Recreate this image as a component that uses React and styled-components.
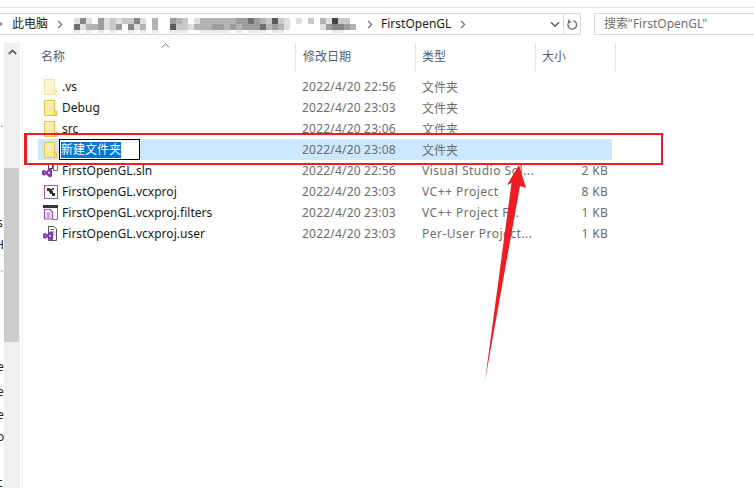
import React from "react";
import styled, { createGlobalStyle } from "styled-components";

const Global = createGlobalStyle`
  html, body { margin: 0; padding: 0; background: #fff; }
  * { box-sizing: border-box; }
`;

const Page = styled.div`
  position: relative;
  width: 754px;
  height: 488px;
  overflow: hidden;
  background: #fff;
  font-family: "Noto Sans", "Noto Sans CJK SC", "Liberation Sans", sans-serif;
  font-size: 12px;
  color: #1a1a1a;
`;

const TopBand = styled.div`
  height: 8px;
  border-bottom: 1px solid #e3e3e3;
`;

const Toolbar = styled.div`
  display: flex;
  align-items: stretch;
  height: 22px;
  margin-top: 5px;
  margin-left: -1px;
`;

const AddressBar = styled.div`
  display: flex;
  align-items: center;
  flex: none;
  width: 582px;
  border: 1px solid #d9d9d9;
`;

const Crumb = styled.span`
  line-height: 20px;
  white-space: nowrap;
  color: #1a1a1a;
  font-size: 12px;
`;

const ChevronSlot = styled.span`
  display: flex;
  align-items: center;
  justify-content: center;
  width: ${(p) => p.$w}px;
  flex: none;
`;

const Spacer = styled.div`
  flex: 1;
`;

const LeadGap = styled.span`
  width: 8px;
  flex: none;
`;

const RefreshCell = styled.div`
  display: flex;
  align-items: center;
  justify-content: center;
  flex: none;
  width: 17px;
  height: 100%;
  border-left: 1px solid #d9d9d9;
`;

const SearchBox = styled.div`
  flex: none;
  width: 170px;
  margin-left: 13px;
  padding-left: 9px;
  border: 1px solid #d9d9d9;
  color: #6f6f6f;
  line-height: 20px;
  white-space: nowrap;
`;

const Main = styled.div`
  display: flex;
  margin-top: 8px;
  height: 445px;
`;

const Fragments = styled.div`
  width: 4px;
  flex: none;
  overflow: hidden;
  display: flex;
  flex-direction: column;
`;

const Fragment = styled.span`
  display: block;
  height: 12px;
  line-height: 12px;
  margin-top: ${(p) => p.$top}px;
  margin-left: ${(p) => p.$left || 0}px;
  font-size: 12px;
  color: ${(p) => p.$color || "#222"};
`;

const ScrollTrack = styled.div`
  width: 16px;
  flex: none;
  display: flex;
  flex-direction: column;
  background: #f0f0f0;
`;

const ScrollButton = styled.div`
  height: 18px;
  display: flex;
  align-items: center;
  justify-content: center;
`;

const ScrollThumb = styled.div`
  width: 15px;
  height: 174px;
  margin-top: 107px;
  background: #cdcdcd;
`;

const Pane = styled.div`
  flex: 1;
  margin-left: 2px;
  border-left: 1px solid #f1f1f1;
  padding-left: 15px;
`;

const Header = styled.div`
  position: relative;
  display: grid;
  grid-template-columns: 258px 120px 120px 80px;
  height: 27px;
`;

const HeaderCell = styled.div`
  padding-left: ${(p) => p.$pad}px;
  border-right: 1px solid #e5e5e5;
  line-height: 28px;
  color: #4c607a;
  font-size: 12px;
`;

const SortCaret = styled.svg`
  position: absolute;
  left: 123px;
  top: 0;
`;

const List = styled.div`
  display: flex;
  flex-direction: column;
  margin-top: 6px;
  width: 574px;
`;

const Row = styled.div`
  display: grid;
  grid-template-columns: 258px 120px 120px 1fr;
  align-items: center;
  height: 21px;
  padding: 0 4px 0 6px;
  background: ${(p) => (p.$selected ? "#cce8ff" : "transparent")};
`;

const NameCell = styled.div`
  display: flex;
  align-items: center;
  gap: 5px;
  min-width: 0;
`;

const IconSlot = styled.span`
  display: flex;
  width: 13px;
  flex: none;
  justify-content: center;
  opacity: ${(p) => (p.$hidden ? 0.5 : 1)};
`;

const FileName = styled.span`
  white-space: nowrap;
  color: #1a1a1a;
  letter-spacing: 0.03px;
`;

const Meta = styled.span`
  color: #6d6d6d;
  white-space: nowrap;
  letter-spacing: ${(p) => p.$spacing || 0}px;
`;

const SizeCell = styled(Meta)`
  text-align: right;
`;

const RenameBox = styled.div`
  display: flex;
  align-items: center;
  width: 81px;
  height: 21px;
  margin-left: -3px;
  padding-left: 1px;
  border: 1px solid #000;
  background: #fff;
`;

const SelectedText = styled.span`
  background: #0078d7;
  color: #fff;
  line-height: 16px;
  white-space: nowrap;
`;

const RedFrame = styled.div`
  position: absolute;
  left: 24px;
  top: 133px;
  width: 639px;
  height: 32px;
  border: 2px solid #ee1c25;
  border-left-width: 3px;
`;

const ArrowMark = styled.svg`
  position: absolute;
  left: 480px;
  top: 160px;
`;

const MosaicArt = styled.svg`
  flex: none;
`;

const Chevron = ({ c = "#777" }) => (
  <svg width="6" height="9" viewBox="0 0 6 9">
    <path d="M1.2 1 L4.6 4.5 L1.2 8" fill="none" stroke={c} strokeWidth="1.3" />
  </svg>
);

const mosaicRows = [
  [1,5,1,0,4,1,2,1,2,2,5,1,0,3,0,0,4,3,2,0,1,3,3,3,3,3,3,4,4,6,4,3,2,7,2,1,0,1,0,2,0,3,1,8,2,2,0],
  [6,1,3,3,4,1,2,4,0,5,1,3,0,3,0,0,7,2,2,1,3,3,3,4,4,3,4,3,4,4,4,6,3,4,3,1,0,0,0,0,0,1,4,5,5,4,3],
  [1,0,1,0,1,0,1,0,0,1,0,1,0,1,0,0,1,1,1,0,0,1,1,1,1,1,0,1,0,1,1,1,0,1,1,0,0,0,0,0,0,0,0,1,1,0,0],
];

const Mosaic = () => (
  <MosaicArt width="286" height="18" viewBox="0 0 286 18">
    {mosaicRows.map((line, r) =>
      line.map((d, c) => {
        if (d === 0) return null;
        const v = 245 - d * 22 + (r === 2 ? 12 : 0);
        return (
          <rect key={`${r}-${c}`} x={c * 6 + 2} y={r * 6 + 3} width="6" height="6" fill={`rgb(${v},${v},${v})`} />
        );
      })
    )}
  </MosaicArt>
);

const FolderIcon = () => (
  <svg width="13" height="16" viewBox="0 0 13 16">
    <defs>
      <linearGradient id="fold" x1="0" y1="0" x2="1" y2="1">
        <stop offset="0" stopColor="#fff2c2" />
        <stop offset="1" stopColor="#fde38c" />
      </linearGradient>
    </defs>
    <path d="M0.5 0.5 H10.5 V11 H12.5 V15.5 H0.5 Z" fill="url(#fold)" stroke="#ecc24f" />
    <path d="M10.5 11 V15.5" stroke="#ecc24f" />
  </svg>
);

const VsMark = () => (
  <path
    d="M0 8 L2.2 6.8 L4 8.4 L7.6 5 L10 6.2 V13.4 L7.6 14.6 L4 11.2 L2.2 12.8 L0 11.6 Z M2 9 V10.6 L2.9 9.8 Z M5.6 9.8 L7.6 11.3 V8.3 Z"
    fill="#8236b4"
    fillRule="evenodd"
  />
);

const SlnIcon = () => (
  <svg width="16" height="15" viewBox="0 0 16 15" style={{ marginLeft: -2, flex: "none" }}>
    <rect x="6.5" y="0.5" width="4" height="5" fill="#fff" stroke="#444" />
    <rect x="11.5" y="0.5" width="4" height="7" fill="#fff" stroke="#777" />
    <VsMark />
  </svg>
);

const ProjIcon = () => (
  <svg width="14" height="14" viewBox="0 0 14 14" style={{ flex: "none" }}>
    <rect x="0.5" y="0.5" width="13" height="13" fill="#fff" stroke="#9b59b0" />
    <path d="M3 3 H6 V4 H8 V6 H9 V8 H11 V11 H8 V9 H6 V7.5 H5 V6 H3 Z" fill="#2e2e2e" />
    <rect x="8" y="3" width="2" height="2" fill="#555" />
  </svg>
);

const FiltersIcon = () => (
  <svg width="15" height="15" viewBox="0 0 15 15" style={{ flex: "none" }}>
    <rect x="0" y="0" width="15" height="3" fill="#333" />
    <path d="M14.5 3 V14.5 H10" fill="none" stroke="#777" />
    <path d="M1.5 4.5 H7 L9.5 7 V14 H1.5 Z" fill="#fff" stroke="#9b4fb0" strokeWidth="1.2" />
    <path d="M3.5 8 H7.5 M3.5 10 H7.5 M3.5 12 H7.5" stroke="#9b4fb0" />
  </svg>
);

const UserIcon = () => (
  <svg width="15" height="15" viewBox="0 0 15 15" style={{ marginLeft: -1, flex: "none" }}>
    <path d="M5.5 0.5 H11 L13.5 3 V14.5 H5.5 Z" fill="#fff" stroke="#555" />
    <path d="M7.5 3.5 H11 M9.5 6 H11.5 M10.5 8.5 H11.5" stroke="#555" />
    <VsMark />
  </svg>
);

const rows = [
  { name: ".vs", date: "2022/4/20 22:56", type: "文件夹", icon: <FolderIcon />, hidden: true },
  { name: "Debug", date: "2022/4/20 23:03", type: "文件夹", icon: <FolderIcon /> },
  { name: "src", date: "2022/4/20 23:06", type: "文件夹", icon: <FolderIcon /> },
  { name: "新建文件夹", date: "2022/4/20 23:08", type: "文件夹", icon: <FolderIcon />, editing: true },
  { name: "FirstOpenGL.sln", date: "2022/4/20 22:56", type: "Visual Studio Sol...", size: "2 KB", icon: <SlnIcon />, latin: true },
  { name: "FirstOpenGL.vcxproj", date: "2022/4/20 23:03", type: "VC++ Project", size: "8 KB", icon: <ProjIcon />, latin: true },
  { name: "FirstOpenGL.vcxproj.filters", date: "2022/4/20 23:03", type: "VC++ Project F...", size: "1 KB", icon: <FiltersIcon />, latin: true },
  { name: "FirstOpenGL.vcxproj.user", date: "2022/4/20 23:03", type: "Per-User Project...", size: "1 KB", icon: <UserIcon />, latin: true },
];

const fragments = [
  { top: 78, text: "·", color: "#35c6e8" },
  { top: 84, text: "s", left: -3 },
  { top: 10, text: "H", left: -5 },
  { top: 15, text: "·", color: "#4cc4f0" },
  { top: 83, text: "e", left: -3 },
  { top: 13, text: "e", left: -3 },
  { top: 11, text: "e", left: -3 },
  { top: 10, text: "o", left: -3 },
  { top: 34, text: "c", left: -3 },
];

export default function App() {
  return (
    <Page>
      <Global />
      <TopBand />
      <Toolbar>
        <AddressBar>
          <ChevronSlot $w={4}>
            <svg width="4" height="6" viewBox="0 0 4 6">
              <path d="M0 1 L3 3 L0 5 Z" fill="#888" />
            </svg>
          </ChevronSlot>
          <LeadGap />
          <Crumb>此电脑</Crumb>
          <ChevronSlot $w={24}>
            <Chevron />
          </ChevronSlot>
          <Mosaic />
          <ChevronSlot $w={23}>
            <Chevron />
          </ChevronSlot>
          <Crumb>FirstOpenGL</Crumb>
          <ChevronSlot $w={24}>
            <Chevron />
          </ChevronSlot>
          <Spacer />
          <ChevronSlot $w={16}>
            <svg width="10" height="7" viewBox="0 0 10 7">
              <path d="M1 1.2 L5 5.2 L9 1.2" fill="none" stroke="#5a5a5a" strokeWidth="1.5" />
            </svg>
          </ChevronSlot>
          <RefreshCell>
            <svg width="11" height="13" viewBox="0 0 11 13">
              <path d="M6.2 2.6 A4.3 4.3 0 1 1 2 4" fill="none" stroke="#6f6f6f" strokeWidth="1.4" />
              <path d="M1 1 L1 4.8 L4.8 4.8 Z" fill="#6f6f6f" />
            </svg>
          </RefreshCell>
        </AddressBar>
        <SearchBox>搜索"FirstOpenGL"</SearchBox>
      </Toolbar>
      <Main>
        <Fragments>
          {fragments.map((f, i) => (
            <Fragment key={i} $top={f.top} $left={f.left} $color={f.color}>
              {f.text}
            </Fragment>
          ))}
        </Fragments>
        <ScrollTrack>
          <ScrollButton>
            <svg width="9" height="6" viewBox="0 0 9 6">
              <path d="M0.8 5 L4.5 1.4 L8.2 5" fill="none" stroke="#5f5f5f" strokeWidth="1.8" />
            </svg>
          </ScrollButton>
          <ScrollThumb />
        </ScrollTrack>
        <Pane>
          <Header>
            <HeaderCell $pad={3}>名称</HeaderCell>
            <HeaderCell $pad={7}>修改日期</HeaderCell>
            <HeaderCell $pad={6}>类型</HeaderCell>
            <HeaderCell $pad={6}>大小</HeaderCell>
            <SortCaret width="9" height="5" viewBox="0 0 9 5">
              <path d="M0.5 4.5 L4.5 0.8 L8.5 4.5" fill="none" stroke="#7a7a7a" />
            </SortCaret>
          </Header>
          <List>
            {rows.map((r) => (
              <Row key={r.name} $selected={r.editing}>
                <NameCell>
                  <IconSlot $hidden={r.hidden}>{r.icon}</IconSlot>
                  {r.editing ? (
                    <RenameBox>
                      <SelectedText>{r.name}</SelectedText>
                    </RenameBox>
                  ) : (
                    <FileName>{r.name}</FileName>
                  )}
                </NameCell>
                <Meta $spacing={0.2}>{r.date}</Meta>
                <Meta $spacing={r.latin ? 0.5 : 0}>{r.type}</Meta>
                <SizeCell $spacing={0.3}>{r.size}</SizeCell>
              </Row>
            ))}
          </List>
        </Pane>
      </Main>
      <RedFrame />
      <ArrowMark width="50" height="225" viewBox="0 0 50 225">
        <path d="M39 5 L46 28 L40 26 L5 221 L31.5 23 L27 25 Z" fill="#ee1c25" />
      </ArrowMark>
    </Page>
  );
}
